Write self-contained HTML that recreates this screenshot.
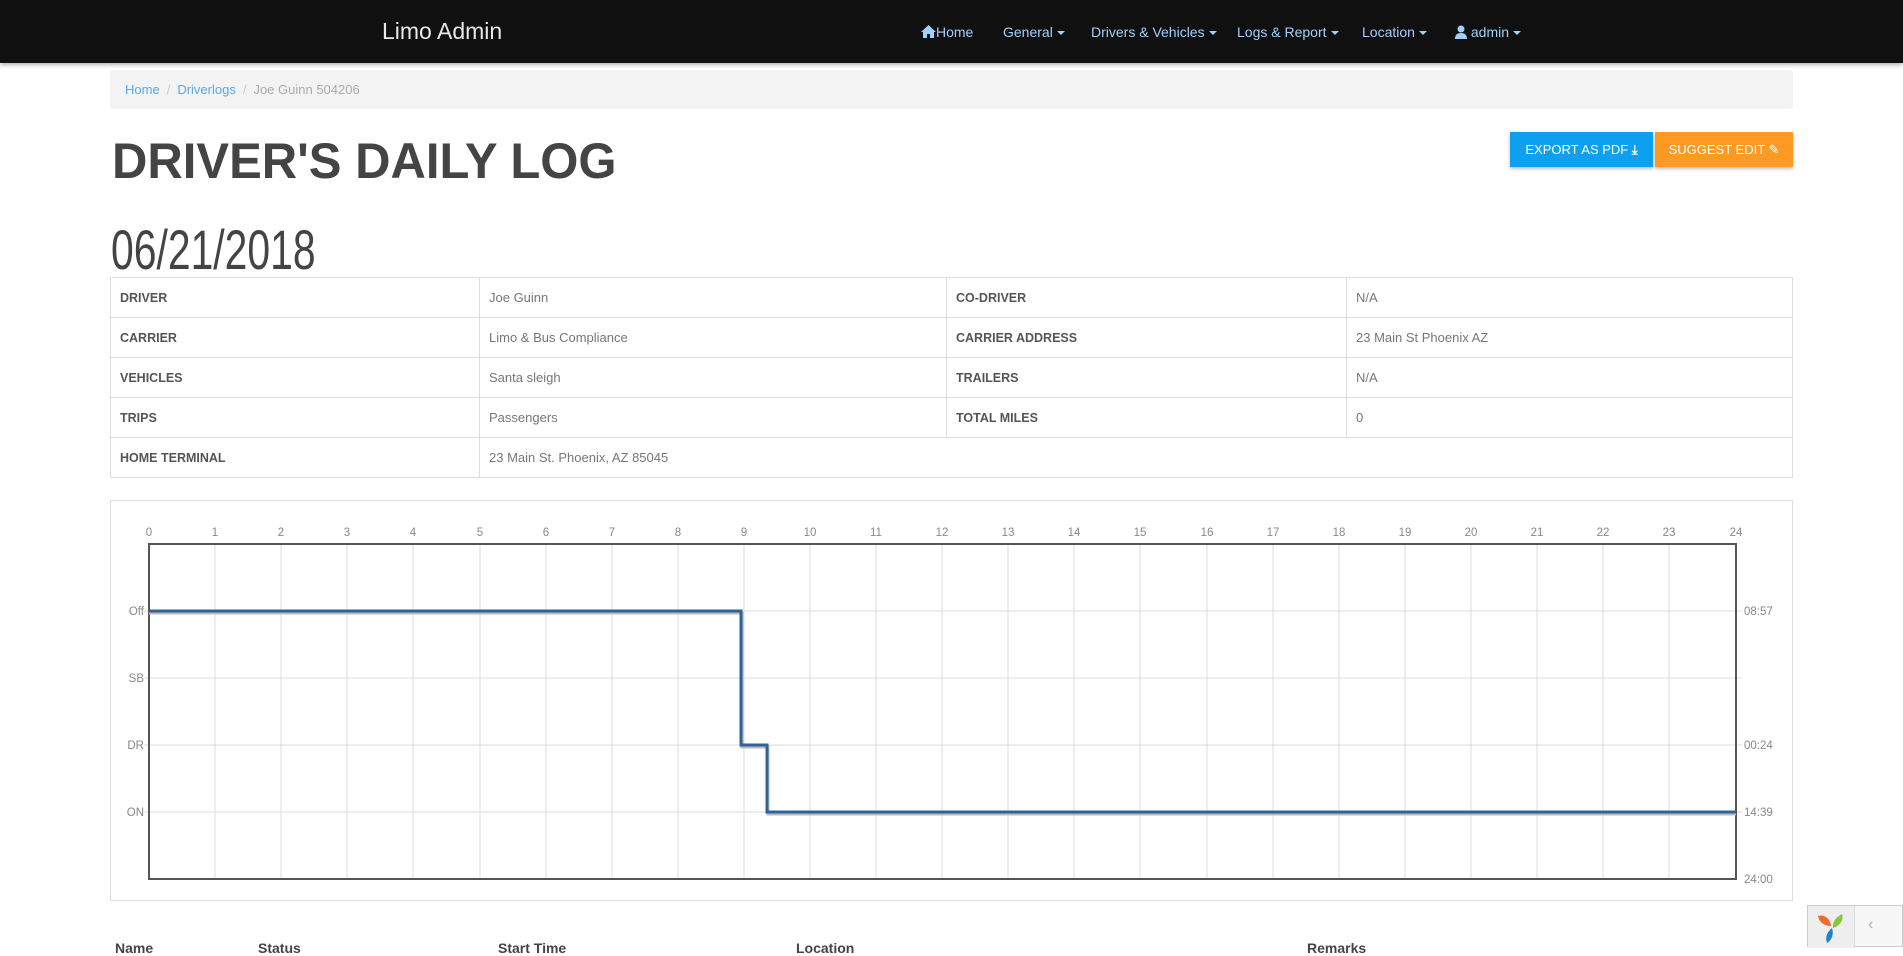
<!DOCTYPE html>
<html><head><meta charset="utf-8"><style>
*{box-sizing:border-box;margin:0;padding:0}
body{width:1903px;height:947px;overflow:hidden;background:#fff;font-family:"Liberation Sans",sans-serif;position:relative}
.nav{position:absolute;left:0;top:0;width:1903px;height:63px;background:#101010;box-shadow:0 2px 4px rgba(0,0,0,.3)}
.brand{position:absolute;left:382px;top:18px;color:#e8e8e8;font-size:23px;font-weight:300}
.ni{position:absolute;top:24px;color:#9fd0ff;font-size:14px;white-space:nowrap}
.car{display:inline-block;width:0;height:0;border-left:4px solid transparent;border-right:4px solid transparent;border-top:4px solid #9fd0ff;vertical-align:middle;margin-left:4px}
.bc{position:absolute;left:110px;top:70px;width:1683px;height:39px;background:#f3f3f3;border-radius:3px;font-size:13px;padding:12px 15px;color:#aaa}
.bc a{color:#5aa8e8;text-decoration:none}
.bc .s{color:#ccc;padding:0 7px}
h1{position:absolute;left:112px;top:132px;font-size:50px;font-weight:bold;color:#444;transform:scaleX(0.98);transform-origin:left top;white-space:nowrap}
.date{position:absolute;left:111px;top:217px;font-size:56px;color:#444;transform:scaleX(0.73);transform-origin:left top;white-space:nowrap}
.btn{position:absolute;top:132px;height:35px;color:#fff;font-size:13px;text-align:center;line-height:35px;box-shadow:0 2px 3px rgba(0,0,0,.25)}
table{position:absolute;left:110px;top:277px;width:1683px;border-collapse:collapse}
td{border:1px solid #ddd;height:40px;padding:0 9px;font-size:13px;color:#777}
td.l{font-weight:bold;color:#555;font-size:12.5px}
.bh{position:absolute;top:940px;font-size:14px;font-weight:bold;color:#444}
</style></head><body>
<div class="nav">
<div class="brand">Limo Admin</div>
<div class="ni" style="left:921px"><svg width="15" height="13" viewBox="0 0 15 13" style="vertical-align:-1px"><path d="M7.5 0L0 7h2v6h4V9h3v4h4V7h2z" fill="#9fd0ff"/></svg>Home</div>
<div class="ni" style="left:1003px">General<span class="car"></span></div>
<div class="ni" style="left:1091px">Drivers &amp; Vehicles<span class="car"></span></div>
<div class="ni" style="left:1237px">Logs &amp; Report<span class="car"></span></div>
<div class="ni" style="left:1362px">Location<span class="car"></span></div>
<div class="ni" style="left:1455px"><svg width="12" height="14" viewBox="0 0 12 14" style="vertical-align:-2px"><circle cx="6" cy="4" r="3.5" fill="#9fd0ff"/><path d="M0 14c0-4 2-6 6-6s6 2 6 6z" fill="#9fd0ff"/></svg> admin<span class="car"></span></div>
</div>
<div class="bc"><a>Home</a><span class="s">/</span><a>Driverlogs</a><span class="s">/</span>Joe Guinn 504206</div>
<h1>DRIVER'S DAILY LOG</h1>
<div class="btn" style="left:1510px;width:143px;background:#0ea0f0">EXPORT AS PDF <b>&#10515;</b></div>
<div class="btn" style="left:1655px;width:138px;background:#fd9a23">SUGGEST EDIT &#9998;</div>
<div class="date">06/21/2018</div>
<table>
<tr><td class="l" style="width:369px">DRIVER</td><td style="width:467px">Joe Guinn</td><td class="l" style="width:400px">CO-DRIVER</td><td>N/A</td></tr>
<tr><td class="l">CARRIER</td><td>Limo &amp; Bus Compliance</td><td class="l">CARRIER ADDRESS</td><td>23 Main St Phoenix AZ</td></tr>
<tr><td class="l">VEHICLES</td><td>Santa sleigh</td><td class="l">TRAILERS</td><td>N/A</td></tr>
<tr><td class="l">TRIPS</td><td>Passengers</td><td class="l">TOTAL MILES</td><td>0</td></tr>
<tr><td class="l">HOME TERMINAL</td><td colspan="3">23 Main St. Phoenix, AZ 85045</td></tr>
</table>
<svg style="position:absolute;left:0;top:0" width="1903" height="947">
<rect x="110.5" y="500.5" width="1682" height="400" fill="none" stroke="#ddd"/>
<g stroke="#ddd" stroke-width="1">
<line x1="215" y1="544" x2="215" y2="879"/><line x1="281" y1="544" x2="281" y2="879"/><line x1="347" y1="544" x2="347" y2="879"/><line x1="413" y1="544" x2="413" y2="879"/><line x1="480" y1="544" x2="480" y2="879"/><line x1="546" y1="544" x2="546" y2="879"/><line x1="612" y1="544" x2="612" y2="879"/><line x1="678" y1="544" x2="678" y2="879"/><line x1="744" y1="544" x2="744" y2="879"/><line x1="810" y1="544" x2="810" y2="879"/><line x1="876" y1="544" x2="876" y2="879"/><line x1="942" y1="544" x2="942" y2="879"/><line x1="1008" y1="544" x2="1008" y2="879"/><line x1="1074" y1="544" x2="1074" y2="879"/><line x1="1140" y1="544" x2="1140" y2="879"/><line x1="1207" y1="544" x2="1207" y2="879"/><line x1="1273" y1="544" x2="1273" y2="879"/><line x1="1339" y1="544" x2="1339" y2="879"/><line x1="1405" y1="544" x2="1405" y2="879"/><line x1="1471" y1="544" x2="1471" y2="879"/><line x1="1537" y1="544" x2="1537" y2="879"/><line x1="1603" y1="544" x2="1603" y2="879"/><line x1="1669" y1="544" x2="1669" y2="879"/>
<line x1="144" y1="611" x2="1742" y2="611"/><line x1="144" y1="678" x2="1742" y2="678"/><line x1="144" y1="745" x2="1742" y2="745"/><line x1="144" y1="812" x2="1742" y2="812"/>
</g>
<rect x="149" y="544" width="1587" height="335" fill="none" stroke="#555" stroke-width="2"/>
<path d="M149 613H742V747H768V814H1736" fill="none" stroke="#bbb" stroke-width="3"/>
<path d="M149 611H741V745H767V812H1736" fill="none" stroke="#2f6499" stroke-width="3"/>
<g font-family="Liberation Sans" font-size="11.5" fill="#888" text-anchor="middle">
<text x="149" y="536">0</text><text x="215" y="536">1</text><text x="281" y="536">2</text><text x="347" y="536">3</text><text x="413" y="536">4</text><text x="480" y="536">5</text><text x="546" y="536">6</text><text x="612" y="536">7</text><text x="678" y="536">8</text><text x="744" y="536">9</text><text x="810" y="536">10</text><text x="876" y="536">11</text><text x="942" y="536">12</text><text x="1008" y="536">13</text><text x="1074" y="536">14</text><text x="1140" y="536">15</text><text x="1207" y="536">16</text><text x="1273" y="536">17</text><text x="1339" y="536">18</text><text x="1405" y="536">19</text><text x="1471" y="536">20</text><text x="1537" y="536">21</text><text x="1603" y="536">22</text><text x="1669" y="536">23</text><text x="1736" y="536">24</text>
</g>
<g font-family="Liberation Sans" font-size="11.5" fill="#888" text-anchor="end">
<text x="144" y="615">Off</text><text x="144" y="682">SB</text><text x="144" y="749">DR</text><text x="144" y="816">ON</text>
</g>
<g font-family="Liberation Sans" font-size="11.5" fill="#888">
<text x="1744" y="615">08:57</text><text x="1744" y="749">00:24</text><text x="1744" y="816">14:39</text><text x="1744" y="883">24:00</text>
</g>
</svg>
<div class="bh" style="left:115px">Name</div><div class="bh" style="left:258px">Status</div><div class="bh" style="left:498px">Start Time</div><div class="bh" style="left:796px">Location</div><div class="bh" style="left:1307px">Remarks</div>
<div style="position:absolute;left:1807px;top:905px;width:96px;height:42px;border:1px solid #ccc;background:#f7f7f7">
<div style="position:absolute;left:0;top:0;width:47px;height:42px;border-right:1px solid #ddd;background:#eee">
<svg width="47" height="42" viewBox="0 0 47 42"><path d="M10 10c6-2 12 2 13 10c-7 0-12-4-13-10z" fill="#f06a2c"/><path d="M34 8c2 6-2 12-9 14c-1-6 3-11 9-14z" fill="#8cc63f"/><path d="M24 22c2 6 0 12-5 15c-2-6 0-11 5-15z" fill="#1f82cf"/></svg></div>
<div style="position:absolute;left:60px;top:10px;color:#aaa;font-size:16px">&#8249;</div>
</div>
</body></html>
